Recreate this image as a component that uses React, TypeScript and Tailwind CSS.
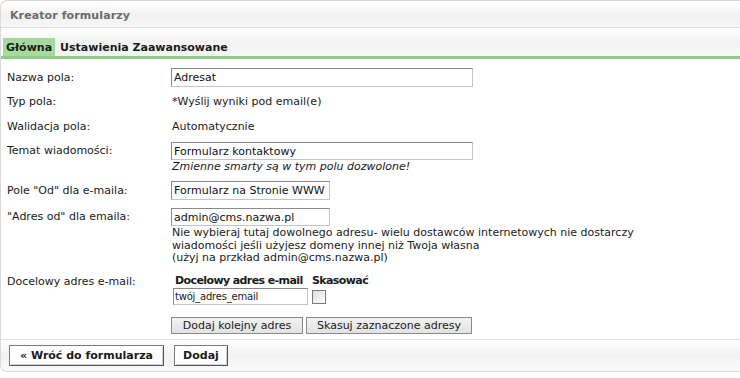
import React from "react";

const rows = {
  label: "w-[164px] shrink-0",
};

const Input = ({ value, w, h = "h-[19px]" }: { value: string; w: string; h?: string }) => (
  <div
    className={`${w} ${h} flex items-center border border-[#8a8a8a] border-r-[#c4c4c4] border-b-[#c4c4c4] bg-white px-[2px] text-[#111]`}
  >
    {value}
  </div>
);

export default function App() {
  return (
    <div className="w-[740px] h-[378px] bg-white font-['DejaVu_Sans',sans-serif] text-[11px] leading-[13px] text-[#1a1a1a]">
      <div className="h-[372px] border border-r-0 border-[#d9d9d9] rounded-l-[7px] overflow-hidden flex flex-col">
        {/* title bar */}
        <div className="shrink-0 mt-[2px] h-[25px] flex items-center pl-[9px] bg-gradient-to-b from-white via-[#f1f1f1] to-[#f7f7f7] border-b border-[#dedede]">
          <span className="font-bold text-[11px] tracking-[0.1px] text-[#6b6b6b]">Kreator formularzy</span>
        </div>

        {/* tabs */}
        <div className="shrink-0 mt-[1px] h-[30px] flex items-end pl-[2px] gap-[2px] bg-gradient-to-b from-white via-[#f3f3f3] to-[#f9f9f9] border-b-[3px] border-[#8fcb86]">
          <div className="h-[18px] px-[3px] flex items-center bg-[#a6d99d] font-bold text-[#1a1a1a]">Główna</div>
          <div className="h-[18px] px-[3px] flex items-center bg-[#f3f3f3] font-bold text-[#1a1a1a]">
            Ustawienia Zaawansowane
          </div>
        </div>

        {/* form */}
        <div className="shrink-0 pl-[6px] pt-[9px] flex flex-col">
          <div className="flex items-center">
            <div className={rows.label}>Nazwa pola:</div>
            <Input value="Adresat" w="w-[302px]" />
          </div>

          <div className="flex mt-[8px]">
            <div className={rows.label}>Typ pola:</div>
            <div className="pl-[1px]">*Wyślij wyniki pod email(e)</div>
          </div>

          <div className="flex mt-[12px]">
            <div className={rows.label}>Walidacja pola:</div>
            <div className="pl-[1px]">Automatycznie</div>
          </div>

          <div className="flex mt-[9px]">
            <div className={`${rows.label} pt-[2px]`}>Temat wiadomości:</div>
            <div className="flex flex-col">
              <Input value="Formularz kontaktowy" w="w-[302px]" h="h-[18px]" />
              <div className="italic pl-[1px]">Zmienne smarty są w tym polu dozwolone!</div>
            </div>
          </div>

          <div className="flex items-center mt-[8px]">
            <div className={rows.label}>Pole "Od" dla e-maila:</div>
            <Input value="Formularz na Stronie WWW" w="w-[159px]" />
          </div>

          <div className="flex mt-[8px]">
            <div className={`${rows.label} pt-[2px]`}>"Adres od" dla emaila:</div>
            <div className="flex flex-col">
              <Input value="admin@cms.nazwa.pl" w="w-[159px]" h="h-[18px]" />
              <div className="leading-[12.5px] pt-[1px] pl-[1px]">
                Nie wybieraj tutaj dowolnego adresu- wielu dostawców internetowych nie dostarczy
                <br />
                wiadomości jeśli użyjesz domeny innej niż Twoja własna
                <br />
                (użyj na przkład admin@cms.nazwa.pl)
              </div>
            </div>
          </div>

          <div className="flex mt-[9px]">
            <div className={`${rows.label} pt-[1px]`}>Docelowy adres e-mail:</div>
            <div className="flex flex-col">
              <div className="flex font-bold whitespace-nowrap tracking-[-0.6px]">
                <div className="w-[141px] pl-[4px]">Docelowy adres e-mail</div>
                <div>Skasować</div>
              </div>
              <div className="flex items-center mt-[1px]">
                <div className="w-[141px] pl-[2px]">
                  <div className="w-[135px] h-[17px] flex items-center border border-[#8a8a8a] border-r-[#c4c4c4] border-b-[#c4c4c4] px-[1px] text-[10px] tracking-[-0.2px]">
                    twój_adres_email
                  </div>
                </div>
                <div className="w-[14px] h-[14px] mt-[2px] border border-[#7a7a7a] bg-gradient-to-br from-[#dcdcdc] to-white" />
              </div>
              <div className="flex gap-[3px] mt-[12px]">
                <div className="w-[132px] h-[17px] flex items-center justify-center border border-[#8a8a8a] bg-gradient-to-b from-[#f2f2f2] to-[#e2e2e2]">
                  Dodaj kolejny adres
                </div>
                <div className="w-[166px] h-[17px] flex items-center justify-center border border-[#8a8a8a] bg-gradient-to-b from-[#f2f2f2] to-[#e2e2e2]">
                  Skasuj zaznaczone adresy
                </div>
              </div>
            </div>
          </div>
        </div>

        {/* footer */}
        <div className="shrink-0 mt-auto h-[32px] flex items-center gap-[10px] pl-[8px] bg-gradient-to-b from-white via-[#f2f2f2] to-[#fafafa] border-t border-[#e2e2e2]">
          <div className="w-[155px] h-[21px] flex items-center justify-center font-bold border border-[#7c7c7c] border-r-[#555] border-b-[#555] bg-white shadow-[inset_1px_1px_0_#fff,inset_-1px_-1px_0_#d0d0d0]">
            « Wróć do formularza
          </div>
          <div className="w-[54px] h-[21px] flex items-center justify-center font-bold border border-[#7c7c7c] border-r-[#555] border-b-[#555] bg-white shadow-[inset_1px_1px_0_#fff,inset_-1px_-1px_0_#d0d0d0]">
            Dodaj
          </div>
        </div>
      </div>
    </div>
  );
}
